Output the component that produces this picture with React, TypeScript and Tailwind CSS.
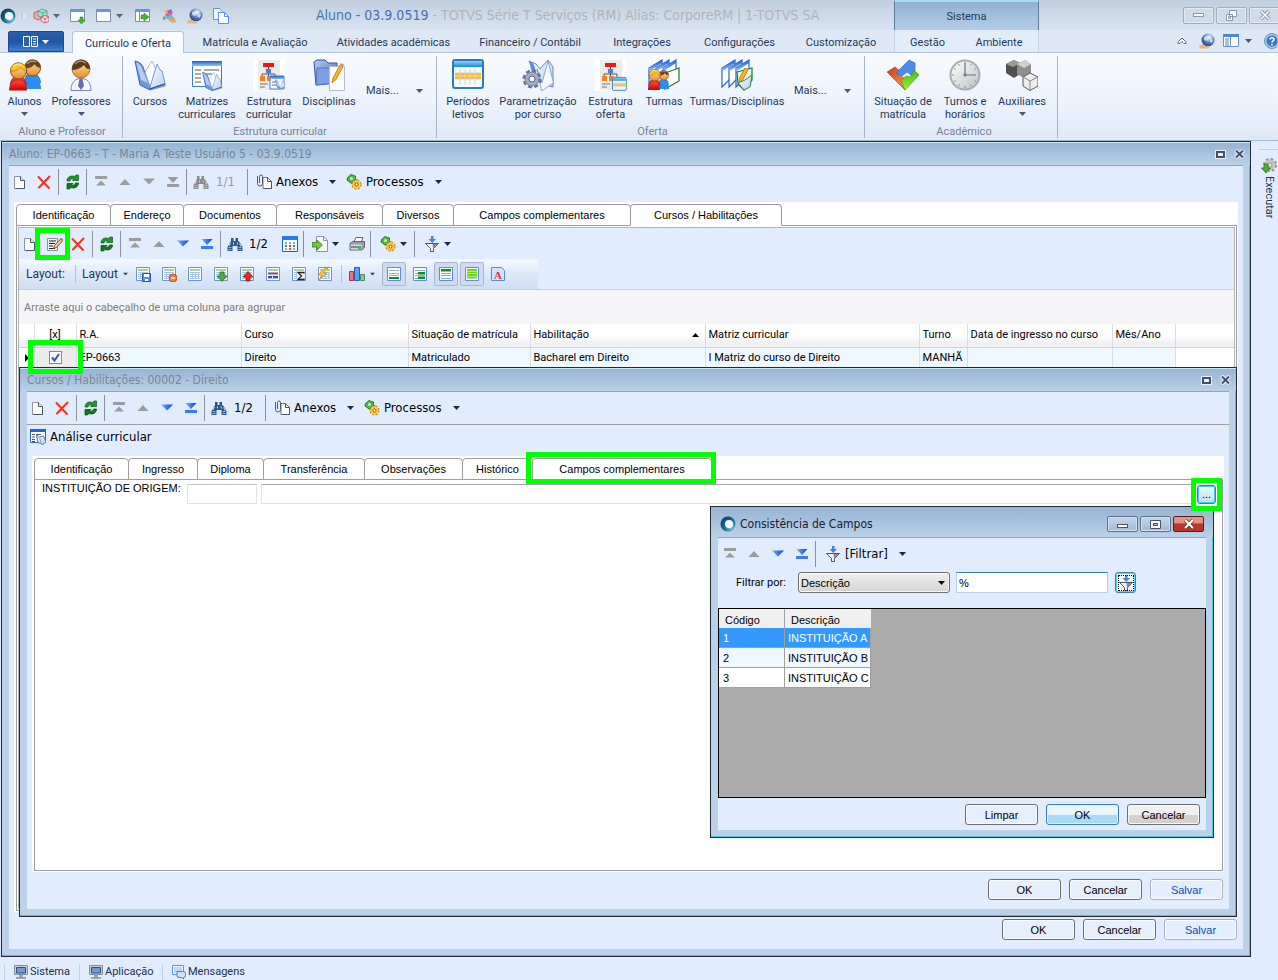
import React from 'react';

type IconProps = { children: React.ReactNode; size?: number; className?: string };

const Svg = ({ children, size = 16, className = '' }: IconProps) => (
  <svg width={size} height={size} viewBox={`0 0 ${size} ${size}`} className={`shrink-0 ${className}`} aria-hidden="true">
    {children}
  </svg>
);

// Shared gradients, referenced by id from every icon below
const Gradients = () => (
  <svg className="absolute w-0 h-0" aria-hidden="true">
    <defs>
      <linearGradient id="blueV" x1="0" y1="0" x2="0" y2="1"><stop offset="0" stopColor="#1e5fe0" /><stop offset="1" stopColor="#8cc0ff" /></linearGradient>
      <linearGradient id="arrow" x1="0" y1="0" x2="1" y2="0"><stop offset="0" stopColor="#7fb0ff" /><stop offset="0.5" stopColor="#3f78f0" /><stop offset="1" stopColor="#1440b8" /></linearGradient>
      <linearGradient id="pageD" x1="0" y1="0" x2="1" y2="1"><stop offset="0" stopColor="#ffffff" /><stop offset="1" stopColor="#b4cdf5" /></linearGradient>
      <linearGradient id="skyV" x1="0" y1="0" x2="0" y2="1"><stop offset="0" stopColor="#8fd4ff" /><stop offset="1" stopColor="#1a86dc" /></linearGradient>
      <linearGradient id="skin" x1="0" y1="0" x2="0" y2="1"><stop offset="0" stopColor="#ffe6a8" /><stop offset="1" stopColor="#e88a2a" /></linearGradient>
      <linearGradient id="redV" x1="0" y1="0" x2="0" y2="1"><stop offset="0" stopColor="#ff4a3a" /><stop offset="1" stopColor="#c80000" /></linearGradient>
      <linearGradient id="orangeH" x1="0" y1="0" x2="1" y2="1"><stop offset="0" stopColor="#c83a14" /><stop offset="1" stopColor="#ff9a5a" /></linearGradient>
      <linearGradient id="greenV" x1="0" y1="0" x2="0" y2="1"><stop offset="0" stopColor="#3fb81c" /><stop offset="1" stopColor="#a8f02e" /></linearGradient>
      <linearGradient id="folder" x1="0" y1="0" x2="1" y2="1"><stop offset="0" stopColor="#b8ccf5" /><stop offset="1" stopColor="#3d66c0" /></linearGradient>
      <radialGradient id="globe" cx="0.6" cy="0.3" r="0.8"><stop offset="0" stopColor="#ffffff" /><stop offset="0.5" stopColor="#5a7fc0" /><stop offset="1" stopColor="#142f6e" /></radialGradient>
      <radialGradient id="ring" cx="0.7" cy="0.7" r="0.9"><stop offset="0" stopColor="#8ad0e4" /><stop offset="0.5" stopColor="#176a8e" /><stop offset="1" stopColor="#0a2c48" /></radialGradient>
      <linearGradient id="clockFace" x1="0" y1="0" x2="1" y2="1"><stop offset="0" stopColor="#ffffff" /><stop offset="1" stopColor="#b9c2c6" /></linearGradient>
    </defs>
  </svg>
);

/* ---------- 16px icons ---------- */

const LogoIcon = () => (
  <Svg>
    <circle cx="8" cy="8" r="7.5" fill="url(#ring)" />
    <circle cx="9" cy="8" r="4" fill="#f2f8fc" />
  </Svg>
);

const DocIcon = () => (
  <Svg>
    <path d="M1.500 2.500h6l4 4v8h-10z" fill="#fff" stroke="#8a93a5" />
    <path d="M7.500 2.500v4h4" fill="#dfe6f2" stroke="#4b5568" />
    <path d="M11.500 6.500v8h-9" fill="none" stroke="#4b5568" />
  </Svg>
);

const DeleteIcon = () => (
  <Svg>
    <path d="M1.500 3 12 14M12.500 2.500 2 13.500" stroke="#f0321e" strokeWidth="2" strokeLinecap="round" />
  </Svg>
);

const RefreshIcon = () => (
  <Svg>
    <path d="M2 7C2 3 6 1 9.500 2.500L11 1h2.500v5.500H7.500L9 4.800C7 4.300 5.500 5 5 7z" fill="#1d9a2c" stroke="#0b5a18" strokeWidth="0.7" />
    <path d="M13.500 9c0 4-4 6-7.500 4.500L4.500 15H2V9.500h6L6.500 11.200c2 .5 3.500-.2 4-2.200z" fill="#0f7a20" stroke="#083f10" strokeWidth="0.7" />
  </Svg>
);

const FirstIcon = () => (
  <Svg><path d="M2 2h12v3H2zM8 6.500l5 5H3z" fill="#9c9c9c" /></Svg>
);
const PrevIcon = () => (
  <Svg><path d="M8 5l5.500 6h-11z" fill="#9c9c9c" /></Svg>
);
const NextIcon = ({ off }: { off?: boolean }) => (
  <Svg><path d="M2 4.500h12L8 10.500z" fill={off ? '#9c9c9c' : 'url(#arrow)'} /></Svg>
);
const LastIcon = ({ off }: { off?: boolean }) => (
  <Svg>
    <path d="M2.500 3h11L8 9z" fill={off ? '#9c9c9c' : 'url(#arrow)'} />
    <path d="M2 10h12v3H2z" fill={off ? '#9c9c9c' : '#3f78f0'} />
  </Svg>
);

const BinocularsIcon = ({ off }: { off?: boolean }) => {
  const c = off ? '#8a8a8a' : '#2b5490';
  const hi = off ? '#d0d0d0' : '#cfe2fa';
  return (
    <Svg>
      <path d="M4 2h2.500v3h2V2H11v3l1.500 1 3 5v4h-5v-5h-5v5h-5v-4l3-5L4 5z" fill={c} />
      <path d="M3.500 7l-1.500 3M10 6.500l.5 2M6.500 6.500v2M12.500 7.500l1.500 3" stroke={hi} />
      <path d="M1.500 11.500h3M11.500 11.500h3M1.500 13.500h3M11.500 13.500h3" stroke={hi} strokeWidth="0.7" />
    </Svg>
  );
};

const ClipIcon = () => (
  <Svg>
    <path d="M7 3.500h4.500l4 4v7H7z" fill="#fff" stroke="#6b7280" />
    <path d="M11.500 3.500v4h4v7H8" fill="none" stroke="#4b5568" />
    <path d="M1.500 2v7.500a2.500 2.500 0 0 0 5 0V2.500a1.500 1.500 0 0 0-3 0v6.500" fill="none" stroke="#5a5a5a" />
  </Svg>
);

const GearsIcon = () => (
  <Svg>
    <path d="M5.500 0l1.500 1.500L9.500 2v2.500l1 1.500-2 1-1 2.500-2.500-.5-2-1.500L1 6l.500-2.500L3.500 2z" fill="#4fb848" stroke="#1f7a25" />
    <circle cx="5.500" cy="4.500" r="1.500" fill="#c8f0b8" />
    <circle cx="10.500" cy="10.500" r="3.800" fill="#fbc63a" stroke="#b5750c" strokeWidth="2.500" strokeDasharray="1.800 1.200" />
    <circle cx="10.500" cy="10.500" r="4.200" fill="#fbc63a" />
    <circle cx="10.500" cy="10.500" r="1.500" fill="#fff" stroke="#8a5a0c" />
  </Svg>
);

const EditIcon = () => (
  <Svg>
    <path d="M.500 2.500h10v12H.500z" fill="#f4f4f4" stroke="#8a93a5" />
    <path d="M2 5h7M2 7.500h6M2 10h4M2 12.500h6" stroke="#222" />
    <path d="M6.500 12.500l1-3L14 2.500l2 2-6.500 7z" fill="#f0c890" stroke="#5a3a20" strokeWidth="0.8" />
    <path d="M13 3.500l1.500-1.500L16 3.500 15 5z" fill="#e06050" />
  </Svg>
);

const CalendarIcon = () => (
  <Svg>
    <path d="M.5.5h15v15H.5z" fill="#f4f9ff" stroke="#1e5fc0" />
    <path d="M0 0h16v4H0z" fill="#2a78e4" />
    <path d="M3 6h2v2H3zM7 6h2v2H7zM11 6h2v2h-2zM3 12h2v2H3zM11 12h2v2h-2z" fill="#7aaef0" />
    <path d="M3 9h2v2H3zM11 9h2v2h-2z" fill="#2f9b4a" />
    <path d="M7 9h2v2H7zM7 12h2v2H7z" fill="#e04a3a" />
  </Svg>
);

const ExportIcon = () => (
  <Svg>
    <path d="M4.500.500h7l4 4v11h-11z" fill="#fff" stroke="#8a93a5" />
    <path d="M11.500.500v4h4" fill="none" stroke="#8a93a5" />
    <path d="M0 6.500h5V4l5.500 5L5 14v-3H0z" fill="#6cc83a" stroke="#2f7f12" strokeWidth="0.8" />
  </Svg>
);

const PrinterIcon = () => (
  <Svg>
    <path d="M4.500 6.500L7 1.500h7l-2 5z" fill="#fff" stroke="#666" />
    <path d="M1 7.500L3.500 5.500h12V11L13 14H1z" fill="#9aa0a8" stroke="#444" strokeWidth="0.8" />
    <path d="M1.500 8.500h11v5h-11z" fill="#d4d8dd" />
    <path d="M2 11h10" stroke="#333" />
    <path d="M9 12h3v1.500H9z" fill="#2fbf3f" />
  </Svg>
);

const FilterIcon = () => (
  <Svg>
    <path d="M1.500 7.500h13L9.500 12.500v3h-3v-3z" fill="#f4f4f4" stroke="#444" strokeWidth="0.9" />
    <path d="M8.500 8h5l-4.500 4.500z" fill="#8a8a8a" />
    <path d="M7 0h2.500v3H12L8.200 7 4.500 3H7z" fill="#4a7fe0" />
  </Svg>
);

const TableBase = () => (
  <>
    <path d="M1.500 1.500h13v13h-13z" fill="#fff" stroke="#6f95c8" />
    <path d="M3 4h10" stroke="#4fa84f" />
    <path d="M3 6.500h10M3 8.500h10M3 10.500h10M3 12.500h10M5.500 6v7M8.500 6v7M11.500 6v7" stroke="#a9c4ea" />
  </>
);

const TableIcon = ({ children }: { children?: React.ReactNode }) => (
  <Svg><TableBase />{children}</Svg>
);

const BandIcon = ({ kind }: { kind: 'bottom' | 'right' | 'top' | 'all' }) => (
  <Svg>
    <path d="M1.500 1.500h13v13h-13z" fill="#fff" stroke="#5f8fd0" />
    {kind === 'all' ? (
      <path d="M3 4h10M3 6.500h10M3 9h10M3 11.500h10" stroke="#6fd41e" strokeWidth="2" />
    ) : (
      <path d="M3 4.500h10M3 7.500h10M3 9.500h10M3 12.500h10" stroke="#86b4b0" />
    )}
    {kind === 'bottom' && <path d="M3 11h10v2H3z" fill="#0c8a2c" />}
    {kind === 'right' && <path d="M6 6h7v2.500H6zM6 10.500h7V13H6z" fill="#0c8a2c" />}
    {kind === 'top' && <path d="M3 3h10v2.500H3z" fill="#0c8a2c" />}
  </Svg>
);

const ChartIcon = () => (
  <Svg>
    <path d="M.5 5.500h4v9h-4z" fill="#f0707c" stroke="#b8303c" />
    <path d="M5.500 1.500h5v13h-5z" fill="#5f9cf0" stroke="#2a5cb0" />
    <path d="M11.500 8.500h4v6h-4z" fill="#8fc49a" stroke="#4a8a5c" />
  </Svg>
);

const LetterIcon = () => (
  <Svg>
    <path d="M1.500 1.500h10l3 3v10h-13z" fill="#cfe4fc" stroke="#5a8ccc" />
    <text x="8" y="13" textAnchor="middle" fontSize="11" fontWeight="bold" fill="#d8342c" fontFamily="Liberation Serif, serif">A</text>
  </Svg>
);

const GlobeIcon = () => (
  <Svg>
    <circle cx="9" cy="7" r="6.500" fill="url(#globe)" />
    <path d="M5 4l3-1 2 2-2 3-3-1zM11 6l3 1-1 3-2-1z" fill="#dbe7f8" opacity="0.800" />
    <path d="M0 12.500l4-1 3 1.500h4l-2 2.500H1z" fill="#e8b48c" />
  </Svg>
);

const WindowIcon = ({ children }: { children?: React.ReactNode }) => (
  <Svg>
    <path d="M.5 1.500h14v12H.5z" fill="#fdfeff" stroke="#7c8ea8" />
    <path d="M1 2h13v2H1z" fill="#5f9be6" />
    {children}
  </Svg>
);

const CubesIcon = () => (
  <Svg>
    <path d="M1 5l4-2 4 2v5l-4 2-4-2z" fill="#f4aaa4" stroke="#c03a30" strokeWidth="0.700" />
    <path d="M5 3l4-2 5 2v5l-4 2-5-2z" fill="#a8e0d4" stroke="#3a9080" strokeWidth="0.700" />
    <path d="M5 3l5 2 4-2M10 5v5" fill="none" stroke="#3a9080" strokeWidth="0.700" />
    <path d="M8 9l4-1.500L16 9v4l-4 2-4-2z" fill="#fae4e6" stroke="#b83a48" strokeWidth="0.700" />
    <path d="M8 9l4 2 4-2M12 11v4" fill="none" stroke="#b83a48" strokeWidth="0.700" />
  </Svg>
);

const PaintIcon = () => (
  <Svg>
    <path d="M3 3l3-2 2 3-3 2z" fill="#e8c040" />
    <path d="M6 3l4-2 2 4-4 2z" fill="#8a6ad0" />
    <path d="M4 6l6-2 1 3-6 2z" fill="#e858b8" />
    <path d="M5 9l6-2 1 2-6 2z" fill="#4fc0e0" />
    <path d="M7 11l6-2 1 2-6 2z" fill="#e0a040" />
    <path d="M9 13l5-2 1 3-4 1z" fill="#d0a890" />
    <path d="M2 9l2-1 1 3-3 1z" fill="#58b858" />
  </Svg>
);

const CopyIcon = () => (
  <Svg>
    <path d="M.5.500h6l3 3v8h-9z" fill="#eef5ff" stroke="#5f92d8" />
    <path d="M5.500 4.500h6l4 4v7h-10z" fill="#fff" stroke="#5f92d8" />
    <path d="M11.500 4.500v4h4" fill="none" stroke="#5f92d8" />
  </Svg>
);

const PanesIcon = () => (
  <Svg>
    <path d="M.5 1.500h15v12H.5z" fill="#fff" stroke="#6a8fc4" />
    <path d="M0 1h16v3H0z" fill="#4f86d6" />
    <path d="M2 6h4M2 8h4M2 10h4M2 12h4" stroke="#5a7fb4" />
    <path d="M7.500 4v9" stroke="#6a8fc4" />
  </Svg>
);

const HelpIcon = () => (
  <Svg>
    <circle cx="8" cy="8" r="7.500" fill="#a9c8ea" stroke="#6a94c8" />
    <circle cx="8" cy="8" r="5.500" fill="#3a78c8" />
    <path d="M6 6.500C6 4 10 4 10 6.500 10 8 8 7.800 8 9.500M8 10.800v1.500" stroke="#fff" strokeWidth="1.500" fill="none" />
  </Svg>
);

const AnalysisIcon = () => (
  <Svg>
    <path d="M.5.500h15v13H.5z" fill="#fff" stroke="#2a6ad0" />
    <path d="M0 0h16v3H0z" fill="#1f62dc" />
    <path d="M2 5.500h3M6 5.500h5M2 8h3M6 8h1M2 10.500h3M2 12.500h3" stroke="#555" />
    <path d="M6.500 6l3 2 4-1 2.500 6-3 2.500-5-2z" fill="url(#pageD)" stroke="#5878b8" />
    <path d="M9.500 8l2 7" stroke="#8aa4d4" />
  </Svg>
);

const MonitorIcon = () => (
  <Svg>
    <path d="M1.500 1.500h13v9h-13z" fill="#c9cdd2" stroke="#8a8f96" />
    <path d="M3.500 3.500h9v5.500h-9z" fill="#6f9bdc" stroke="#2d4f8a" />
    <path d="M6 11h4v2H6zM3 13h10v2H3z" fill="#9aa0a8" />
  </Svg>
);

const MessagesIcon = () => (
  <Svg>
    <path d="M1.500 1.500h11v9h-11z" fill="#eef6ff" stroke="#5f92d8" />
    <path d="M3 4h8M3 6h8M3 8h5" stroke="#8fb4e4" />
    <path d="M6 7.500h6.500a2 2 0 0 1 2 2v2a2 2 0 0 1-2 2V15l-2-1.500H8a2 2 0 0 1-2-2z" fill="#cfe2fa" stroke="#4f7fc0" />
  </Svg>
);

const RunIcon = () => (
  <Svg>
    <circle cx="9" cy="7" r="5" fill="none" stroke="#8f8f8a" strokeWidth="4" strokeDasharray="2.200 1.700" />
    <circle cx="9" cy="7" r="4" fill="none" stroke="#c4c4be" strokeWidth="3" />
    <circle cx="9" cy="7" r="2" fill="#e1edff" stroke="#8f8f8a" />
    <path d="M3 6h4v4h2.500L5 15 .5 10H3z" fill="#4fae3a" stroke="#2a7a1c" strokeWidth="0.800" />
  </Svg>
);

const Caret = ({ className = 'text-[#1f2937]' }: { className?: string }) => (
  <svg width="7" height="4" viewBox="0 0 7 4" className={`shrink-0 ${className}`} aria-hidden="true">
    <path d="M0 0h7L3.500 4z" fill="currentColor" />
  </svg>
);

/* ---------- 32px ribbon icons ---------- */

const Person = ({ x, y, hair, body }: { x: number; y: number; hair: string; body: string }) => (
  <g transform={`translate(${x} ${y})`}>
    <path d="M1 24c0-6 3.500-10 8-10s8.500 4 8.500 10z" fill={body} stroke="#30406a" strokeWidth="0.500" />
    <circle cx="9.500" cy="9" r="8" fill="url(#skin)" stroke="#8a4a10" />
    <path d="M1.500 9C1.500 4 5 .800 9.500 .800S17.500 4 17.500 8.500C14 8.500 12.500 6.500 11.500 5 9 8.500 5 9.500 1.500 9z" fill={hair} stroke="#7a4a14" strokeWidth="0.500" />
    <path d="M4 5c2-3 6-3.500 9-2" stroke="#fff" strokeWidth="1.200" opacity="0.500" fill="none" />
  </g>
);

const Frames = () => (
  <>
    <path d="M1 9l13-8v14L1 28z" fill="#fff" stroke="#2a62cc" strokeWidth="1.200" />
    <path d="M1 9l13-8v3L1 12.500z" fill="url(#blueV)" />
    <path d="M8 9l13-8v14L8 28z" fill="#fff" stroke="#2a62cc" strokeWidth="1.200" />
    <path d="M8 9l13-8v3L8 12.500z" fill="url(#blueV)" />
    <path d="M15 9l13-8v14L15 28z" fill="#fff" stroke="#2a62cc" strokeWidth="1.200" />
    <path d="M15 9l13-8v3L15 12.500z" fill="url(#blueV)" />
  </>
);

const BookShape = () => (
  <>
    <path d="M1 2c5 1 8 4 9 9l7 13-1 7L6 26z" fill="#6f96e0" stroke="#3a64b4" />
    <path d="M2 3c4 2 6 5 7 9l5 12-7-3z" fill="#b4ccf6" />
    <path d="M11 13l7-11 5 11-1 12-6 2z" fill="#fff" stroke="#8ea4cc" strokeWidth="0.800" />
    <path d="M16 28L23 5l3 6 2 1 3 12v3l-15 4z" fill="url(#pageD)" stroke="#5a7cc0" strokeWidth="0.800" />
    <path d="M16 30l15-5" stroke="#2f58ac" strokeWidth="1.500" />
  </>
);

const CalendarShape = () => (
  <>
    <path d="M3 1h26a2 2 0 0 1 2 2v24a2 2 0 0 1-2 2H3a2 2 0 0 1-2-2V3a2 2 0 0 1 2-2z" fill="#f4faff" stroke="#2a7cbc" strokeWidth="2" />
    <path d="M2 2h28v6H2z" fill="url(#skyV)" />
    <path d="M3 14h26v6H3z" fill="#ffb41e" />
    <path d="M3 17h26" stroke="#ffd04a" strokeWidth="2" />
    <path d="M3 14h26M3 20h26M8 10v16M13 10v16M18 10v16M23 10v16" stroke="#d4d4d4" />
  </>
);

const ChartPage = () => (
  <>
    <path d="M0 0h32v32H0z" fill="#fff" />
    <path d="M5 1h22v30H5z" fill="#ebebeb" />
    <path d="M10 4h11v4H10z" fill="#f41414" />
    <path d="M15.500 8v10M9 18v-3h13v3" stroke="#555" fill="none" />
    <path d="M13 10h5v4h-5z" fill="#4a80d8" />
    <path d="M7 17h5v5H7zM14 17h5v5h-5z" fill="#f58220" />
    <path d="M7 25h8M7 28h5" stroke="#b0b0b0" strokeWidth="2" />
  </>
);

const bigIcons: Record<string, React.ReactNode> = {
  alunos: (
    <>
      <Person x={14} y={0} hair="#6a4420" body="#2a90f0" />
      <path d="M15 30c0-8 4-10 9-10s8 4 8 10z" fill="#2a90f0" />
      <Person x={0} y={3} hair="#ffc21e" body="url(#redV)" />
      <path d="M0 31.500c0-7 4-10 9-10s9 3 9 10z" fill="url(#redV)" />
    </>
  ),
  professores: (
    <>
      <path d="M6 31.500c0-8 4-12 10-12s10 4 10 12z" fill="#f6f8ff" stroke="#7484b8" />
      <path d="M14.500 20h3l1.500 7-3 4-3-4z" fill="#6a68b8" />
      <circle cx="16" cy="10" r="9" fill="url(#skin)" stroke="#a05a14" strokeWidth="0.800" />
      <path d="M7 11C7 4 11 .500 16 .500S25 4 25 10c-4 0-5-2-6-4-3 3.500-8 5-12 5z" fill="#5a3a1e" />
      <path d="M10 5c2-3 7-4 11-1" stroke="#b08a60" strokeWidth="1.500" fill="none" />
    </>
  ),
  cursos: <BookShape />,
  matrizes: (
    <>
      <path d="M1.500 2.500h29v25h-29z" fill="#fdfeff" stroke="#3f7ad8" />
      <path d="M1 2h30v5H1z" fill="url(#blueV)" />
      <path d="M4 11h6M13 11h15M4 15h6M13 15h8M4 19h6M4 23h6" stroke="#555" />
      <g transform="translate(11 12) scale(0.640)"><BookShape /></g>
    </>
  ),
  estrutura: (
    <>
      <ChartPage />
      <path d="M17 17h14v13H17z" fill="#fff" stroke="#3f7ad8" />
      <path d="M17 17h14v3H17z" fill="url(#blueV)" />
      <path d="M19 23h4M19 26h4" stroke="#666" />
      <g transform="translate(22 20) scale(0.320)"><BookShape /></g>
    </>
  ),
  disciplinas: (
    <>
      <path d="M1 3l3-2h8l3 3h9v20L3 26z" fill="url(#folder)" stroke="#2f55a4" />
      <path d="M4 9h18v15L3 26z" fill="#7f9fe4" stroke="#3f66b4" strokeWidth="0.700" />
      <path d="M16.500 7.500h15v24h-15z" fill="#fdfdff" stroke="#b4bccc" />
      <path d="M19 24l1-5 7-13 3 1.500-7 13z" fill="#ffb424" stroke="#b4700c" strokeWidth="0.800" />
      <path d="M27 6l1-2 3 1.500-1 2z" fill="#e08a80" />
    </>
  ),
  periodos: <CalendarShape />,
  parametrizacao: (
    <>
      <g transform="translate(6 0)">
        <path d="M1 2l12 23 12 3V8L20 1l-8 9-4-5z" fill="url(#pageD)" stroke="#6a88c4" />
        <path d="M9 10l5 14 6-22 5.500 22-12 8z" fill="#f4f8ff" stroke="#7a94c8" strokeWidth="0.800" />
        <path d="M1 2c4 1 5 4 6 7l2 8-5-3z" fill="#5a8fe0" />
      </g>
      <circle cx="10" cy="20" r="7" fill="#a4acc4" stroke="#6a7290" strokeWidth="5" strokeDasharray="3.400 2.100" />
      <circle cx="10" cy="20" r="7" fill="#a4acc4" stroke="#7a82a0" />
      <circle cx="10" cy="20" r="3" fill="#f4f6fb" stroke="#5a6280" />
    </>
  ),
  oferta: (
    <>
      <ChartPage />
      <g transform="translate(17 18) scale(0.460)"><CalendarShape /></g>
    </>
  ),
  turmas: (
    <>
      <Frames />
      <path d="M17 14l14-5v13l-14 8z" fill="#fff" stroke="#1a7a2c" strokeWidth="1.200" />
      <g transform="translate(10 11) scale(0.600)"><Person x={0} y={0} hair="#6a4420" body="#2a90f0" /></g>
      <path d="M11 30c0-6 2-8 5-8s5 2 5 8z" fill="#2a90f0" />
      <g transform="translate(0 10) scale(0.700)"><Person x={0} y={0} hair="#ffc21e" body="url(#redV)" /></g>
      <path d="M0 31c0-6 3-8 6.500-8s5.500 2 5.500 8z" fill="url(#redV)" />
    </>
  ),
  turmasDisciplinas: (
    <>
      <Frames />
      <path d="M16 13l15-4v12l-8 10-6-6z" fill="#e8f8e8" stroke="#1a7a2c" strokeWidth="1.200" />
      <path d="M17 24l7-3 7-5-2 12-6 3z" fill="url(#pageD)" stroke="#2f8a4a" />
      <path d="M18 23l1-5 5-9 3 1.500-5 10z" fill="#ffb424" stroke="#b4700c" strokeWidth="0.800" />
    </>
  ),
  situacao: (
    <>
      <path d="M0 13l8-5 5 4-3 3 7 4-3 5 4 7z" fill="url(#orangeH)" stroke="#b03a14" strokeWidth="0.600" />
      <path d="M9 14L22 1l6 3v8l-4 4-4-3-5 4z" fill="#4f8ce8" stroke="#2a5cb8" strokeWidth="0.600" />
      <path d="M14 22l5-5 4 1 4-7 5 5-14 15z" fill="url(#greenV)" stroke="#3a9a0c" strokeWidth="0.600" />
    </>
  ),
  turnos: (
    <>
      <circle cx="16" cy="16" r="14.500" fill="url(#clockFace)" stroke="#a8aeb2" strokeWidth="2" />
      <path d="M16 4v12h11" stroke="#6f7678" fill="none" strokeWidth="1.200" />
      <path d="M14 16h4M16 14v4" stroke="#6f7678" />
      <path d="M16 3v2M16 27v2M3 16h2M9.500 5l1 1.500M22.500 5l-1 1.500M5 9.500l1.500 1M5 22.500l1.500-1M27 22.500l-1.500-1M9.500 27l1-1.500M22.500 27l-1-1.500M27 9.500l-1.500 1" stroke="#7f8688" />
    </>
  ),
  auxiliares: (
    <>
      <path d="M0 5l8-4 6 3v11l-6 4-8-5z" fill="#4f4f4f" />
      <path d="M0 5l8-4 6 3-7 4z" fill="#9a9a9a" />
      <path d="M11 5l8-4 6 4v10l-7 4-7-4z" fill="#8f8f8f" />
      <path d="M11 5l8-4 6 4-7 4z" fill="#d0d0d0" />
      <path d="M17 18l7-4 8 4v9l-8 4.500-7-4.500z" fill="#ececec" stroke="#5a5a5a" />
      <path d="M17 18l7 4 8-4M24 22v9" stroke="#8a8a8a" fill="none" />
    </>
  ),
};

/* ---------- Ribbon ---------- */

interface RibbonButtonProps {
  icon: string;
  label: string;
  width: string;
  caret?: boolean;
}

const RibbonButton: React.FC<RibbonButtonProps> = ({ icon, label, width, caret }) => (
  <button className={`flex flex-col items-center ${width}`}>
    <Svg size={32}>{bigIcons[icon]}</Svg>
    <span className="mt-1 whitespace-pre text-center leading-[13px]">{label}</span>
    {caret && <Caret className="mt-1 text-[#46577a]" />}
  </button>
);

const MoreButton = () => (
  <button className="flex items-center self-start mt-6 pl-2 h-4">
    <span className="w-[50px] text-left">Mais...</span>
    <Caret className="text-[#46577a]" />
  </button>
);

const RibbonGroup = ({ title, width, children }: { title: string; width: string; children: React.ReactNode }) => (
  <div className={`flex flex-col h-[82px] border-r border-[#a3b4cc] shrink-0 ${width}`}>
    <div className="flex flex-1 items-start pt-[3px]">{children}</div>
    <div className="h-3 leading-3 text-center text-[#75839b]">{title}</div>
  </div>
);

const menuTabs = [
  { label: 'Matrícula e Avaliação', width: 'w-[136px]' },
  { label: 'Atividades acadêmicas', width: 'w-[141px]' },
  { label: 'Financeiro / Contábil', width: 'w-[132px]' },
  { label: 'Integrações', width: 'w-[92px]' },
  { label: 'Configurações', width: 'w-[103px]' },
  { label: 'Customização', width: 'w-[100px]' },
];

const WindowButton = ({ children, label }: { children: React.ReactNode; label: string }) => (
  <button aria-label={label} className="flex items-center justify-center w-[31px] h-[17px] rounded-[2px] border border-[#9fadbe] bg-[#cfdbe8] shadow-[inset_0_0_0_1px_#e2eaf3]">
    {children}
  </button>
);

const TitleBar = () => (
  <header className="flex items-stretch h-[30px] bg-linear-to-b from-[#c1cfdf] to-[#d7e3f1]">
    <div className="flex items-center w-[316px] shrink-0 pt-0.5">
      <LogoIcon />
      <span className="ml-1.5 w-[3px] h-1 bg-[#e8eff7] border-l border-[#a8b6c6]" />
      <button className="ml-2 flex items-center gap-1" aria-label="Módulos"><CubesIcon /><Caret className="text-[#55657f]" /></button>
      <button className="ml-2.5" aria-label="Nova janela">
        <WindowIcon><path d="M10 9h3v3h2l-3.500 4L8 12h2z" fill="#4fae3a" stroke="#2a7a1c" strokeWidth="0.500" /></WindowIcon>
      </button>
      <button className="ml-2.5 flex items-center gap-1" aria-label="Janelas"><WindowIcon /><Caret className="text-[#55657f]" /></button>
      <button className="ml-3" aria-label="Executar">
        <WindowIcon><path d="M4.500 3v10" stroke="#7c8ea8" /><path d="M6 7h3V5l5 4-5 4v-2H6z" fill="#4fae3a" stroke="#2a7a1c" strokeWidth="0.500" /></WindowIcon>
      </button>
      <button className="ml-2.5" aria-label="Aparência"><PaintIcon /></button>
      <button className="ml-2.5" aria-label="Internet"><GlobeIcon /></button>
      <button className="ml-2.5" aria-label="Copiar"><CopyIcon /></button>
    </div>
    <h1 className="w-[578px] shrink-0 self-center whitespace-nowrap font-['DejaVu_Sans_Condensed','Noto_Sans',sans-serif] text-sm text-[#b3b3b8]">
      <span className="text-[#4272b2]">Aluno - 03.9.0519</span> - TOTVS Série T Serviços (RM) Alias: CorporeRM | 1-TOTVS SA
    </h1>
    <div className="flex items-center justify-center w-[145px] shrink-0 pt-0.5 border-x border-[#5f7a98] border-t-2 border-t-[#a8dcf0] bg-linear-to-b from-[#92b2d1] to-[#b4cde7] text-[#1e395b]">
      Sistema
    </div>
    <div className="flex flex-1 items-center justify-end gap-0.5 -mr-0.5">
      <WindowButton label="Minimizar"><span className="w-[11px] h-1 border border-[#8c98a8] bg-white" /></WindowButton>
      <WindowButton label="Restaurar">
        <svg width="13" height="11" viewBox="0 0 13 11"><path d="M4.500.500h7v6h-7zM1.500 4.500h6v6h-6z" fill="#fff" stroke="#8c98a8" /><path d="M3.500 6.500h2v2h-2z" fill="none" stroke="#8c98a8" /></svg>
      </WindowButton>
      <WindowButton label="Fechar">
        <svg width="12" height="10" viewBox="0 0 12 10"><path d="M2 1l8 8M10 1L2 9" stroke="#8c98a8" strokeWidth="3.500" /><path d="M2 1l8 8M10 1L2 9" stroke="#fff" strokeWidth="1.500" /></svg>
      </WindowButton>
    </div>
  </header>
);

const MenuTabs = () => (
  <nav className="flex items-stretch h-[23px] shrink-0 bg-[#dfe9f6] border-b border-[#b1c3dd] text-[#1e395b]">
    <button aria-label="Menu" className="flex items-center justify-center gap-1 ml-2 mt-px w-14 rounded-t-[2px] border border-[#1c4a92] bg-linear-to-b from-[#2a5fae] via-[#1f54a6] to-[#3f80d0]">
      <svg width="15" height="11" viewBox="0 0 15 11"><path d="M.5.500h6v10h-6zM8.500.500h6v10h-6z" fill="#2f62ac" stroke="#fff" /><path d="M10 3h3M10 5.500h3M10 8h3" stroke="#fff" /></svg>
      <Caret className="text-white" />
    </button>
    <button className="ml-2 mt-px -mb-px w-[112px] pt-0.5 rounded-t-[3px] border border-b-0 border-[#b1c3dd] bg-[#f8fbff]">Currículo e Oferta</button>
    <span className="w-[3px]" />
    {menuTabs.map(t => (
      <button key={t.label} className={`whitespace-nowrap pt-1 ${t.width}`}>{t.label}</button>
    ))}
    <div className="flex ml-[3px] w-[145px] border-x border-[#c3d3e6] bg-[#e3edf9]">
      <button className="w-[65px] pt-1">Gestão</button>
      <button className="w-[78px] pt-1">Ambiente</button>
    </div>
    <div className="flex flex-1 items-center justify-end">
      <button aria-label="Recolher faixa" className="mr-3">
        <svg width="10" height="8" viewBox="0 0 10 8"><path d="M1 5l4-4 4 4v1.500H7L5 4.500 3 6.500H1z" fill="#fff" stroke="#5a6880" /></svg>
      </button>
      <button aria-label="Idioma" className="mr-2"><GlobeIcon /></button>
      <button aria-label="Painéis" className="flex items-center gap-1.5"><PanesIcon /><Caret className="text-[#46577a]" /></button>
      <button aria-label="Ajuda" className="ml-3 -mr-0.5"><HelpIcon /></button>
    </div>
  </nav>
);

const Ribbon = () => (
  <div className="flex items-start h-[88px] pt-[3px] shrink-0 overflow-hidden border-b border-[#a9b9ce] bg-linear-to-b from-[#f8fbff] via-[#eef4fd] to-[#dfe9f6] text-[#1e395b]">
    <RibbonGroup title="Aluno e Professor" width="w-[123px] pl-0.5">
      <RibbonButton icon="alunos" label="Alunos" width="w-[45px]" caret />
      <RibbonButton icon="professores" label="Professores" width="w-[68px]" caret />
    </RibbonGroup>
    <RibbonGroup title="Estrutura curricular" width="w-[314px] pl-px">
      <RibbonButton icon="cursos" label="Cursos" width="w-[52px]" />
      <RibbonButton icon="matrizes" label={'Matrizes\ncurriculares'} width="w-[62px]" />
      <RibbonButton icon="estrutura" label={'Estrutura\ncurricular'} width="w-[62px]" />
      <RibbonButton icon="disciplinas" label="Disciplinas" width="w-[58px]" />
      <MoreButton />
    </RibbonGroup>
    <RibbonGroup title="Oferta" width="w-[428px] pl-1">
      <RibbonButton icon="periodos" label={'Períodos\nletivos'} width="w-[54px]" />
      <RibbonButton icon="parametrizacao" label={'Parametrização\npor curso'} width="w-[86px]" />
      <RibbonButton icon="oferta" label={'Estrutura\noferta'} width="w-[59px]" />
      <RibbonButton icon="turmas" label="Turmas" width="w-12" />
      <RibbonButton icon="turmasDisciplinas" label="Turmas/Disciplinas" width="w-[98px]" />
      <MoreButton />
    </RibbonGroup>
    <RibbonGroup title="Acadêmico" width="w-[193px] pl-1.5">
      <RibbonButton icon="situacao" label={'Situação de\nmatrícula'} width="w-16" />
      <RibbonButton icon="turnos" label={'Turnos e\nhorários'} width="w-[60px]" />
      <RibbonButton icon="auxiliares" label="Auxiliares" width="w-[54px]" caret />
    </RibbonGroup>
  </div>
);

/* ---------- Shared pieces ---------- */

const Highlight = ({ className }: { className: string }) => (
  <span className={`absolute z-30 border-[5px] border-[#00ff00] pointer-events-none ${className}`} />
);

const ToolButton = ({ label, children, className = 'w-6' }: { label: string; children: React.ReactNode; className?: string }) => (
  <button aria-label={label} title={label} className={`relative flex items-center justify-center shrink-0 h-6 ${className}`}>
    {children}
  </button>
);

const Sep = () => <span className="ml-px mr-0.5 w-px h-[26px] bg-[#8b909a] shrink-0" />;

const NavButtons = ({ off }: { off?: boolean }) => (
  <>
    <ToolButton label="Primeiro"><FirstIcon /></ToolButton>
    <ToolButton label="Anterior"><PrevIcon /></ToolButton>
    <ToolButton label="Próximo"><NextIcon off={off} /></ToolButton>
    <ToolButton label="Último"><LastIcon off={off} /></ToolButton>
  </>
);

const toolbarText = "font-['DejaVu_Sans_Condensed','Noto_Sans',sans-serif] text-[13px] text-black";

const RecordToolbar = ({ counter, off }: { counter: string; off?: boolean }) => (
  <div className={`flex items-center h-8 ${toolbarText}`}>
    <ToolButton label="Novo"><DocIcon /></ToolButton>
    <ToolButton label="Excluir"><DeleteIcon /></ToolButton>
    <Sep />
    <ToolButton label="Atualizar"><RefreshIcon /></ToolButton>
    <Sep />
    <NavButtons off={off} />
    <Sep />
    <ToolButton label="Localizar"><BinocularsIcon off={off} /></ToolButton>
    <span className={`w-[33px] pl-[3px] ${off ? 'text-[#9a9a9a]' : ''}`}>{counter}</span>
    <Sep />
    <button className="flex items-center h-6 ml-1.5 gap-1">
      <ClipIcon />
      <span className="w-[49px] text-left">Anexos</span>
      <Caret />
    </button>
    <button className="flex items-center h-6 ml-2.5 gap-1">
      <GearsIcon />
      <span className="w-[65px] text-left">Processos</span>
      <Caret />
    </button>
  </div>
);

interface PageTab { label: string; width: string; active?: boolean; marked?: boolean }

const TabStrip = ({ tabs }: { tabs: PageTab[] }) => (
  <div role="tablist" className="flex h-[22px] -mb-px font-['Liberation_Sans',Arial,sans-serif] text-[11px] text-black">
    {tabs.map(t => (
      <button
        key={t.label}
        role="tab"
        aria-selected={!!t.active}
        className={`relative -mr-px rounded-t-[4px] border border-[#9d9d9d] bg-white ${t.width} ${t.active ? 'border-b-white' : ''}`}
      >
        {t.label}
        {t.marked && <Highlight className="-left-[7px] -right-[5px] -top-[7px] -bottom-[5px]" />}
      </button>
    ))}
  </div>
);

const buttonStyles = {
  normal: 'border-[#6f6f6f] bg-[#e6effd] text-black shadow-[inset_0_0_0_1px_#f8fbff]',
  primary: 'border-[#3c7fb1] bg-linear-to-b from-[#e8f6fd] from-50% to-[#a9dbf6] to-51% text-black shadow-[inset_0_0_0_1px_#d8f2fc]',
  gray: 'border-[#707070] bg-linear-to-b from-[#f0f0f0] from-50% to-[#d2d2d2] to-51% text-black shadow-[inset_0_0_0_1px_#f6f6f6]',
  link: 'border-[#adb2b8] bg-[#e3eefe] text-[#0f4fb0] shadow-[inset_0_0_0_1px_#f8fbff]',
};

const PushButton = ({ label, kind = 'normal' }: { label: string; kind?: keyof typeof buttonStyles }) => (
  <button className={`w-[73px] h-[21px] rounded-[3px] border font-['Liberation_Sans',Arial,sans-serif] text-[11px] ${buttonStyles[kind]}`}>
    {label}
  </button>
);

const WindowFooter = () => (
  <div className="flex justify-end gap-2 pt-[7px] pb-[9px] pr-1.5">
    <PushButton label="OK" />
    <PushButton label="Cancelar" />
    <PushButton label="Salvar" kind="link" />
  </div>
);

const ChildWindow = ({ title, className, children }: { title: string; className: string; children: React.ReactNode }) => (
  <section className={`flex flex-col border border-[#1f2b33] bg-[#bad1e9] shadow-[inset_-1px_-1px_0_#4bc4e2] ${className}`}>
    <div className="flex items-center h-[23px] shrink-0 pl-[7px] pr-[5px] border-t border-[#c6ecf6] bg-linear-to-b from-[#98b4d2] to-[#b9d1ea] font-['DejaVu_Sans_Condensed','Noto_Sans',sans-serif] text-xs text-[#7c858e]">
      <h2 className="flex-1">{title}</h2>
      <button aria-label="Maximizar" className="mr-2">
        <svg width="11" height="9" viewBox="0 0 11 9"><path d="M0 0h11v9H0z" fill="#e8f0f8" /><path d="M2 2h7v5H2z" fill="none" stroke="#44506a" strokeWidth="2" /></svg>
      </button>
      <button aria-label="Fechar">
        <svg width="11" height="10" viewBox="0 0 11 10"><path d="M1.500 1l8 8M9.500 1l-8 8" stroke="#e8f0f8" strokeWidth="4" /><path d="M2 1.500l7 7M9 1.500l-7 7" stroke="#44506a" strokeWidth="2" /></svg>
      </button>
    </div>
    <div className="flex flex-col flex-1 mx-[7px] mb-[7px] border-t border-[#a0a0a0] bg-[#e1edff]">{children}</div>
  </section>
);

/* ---------- Aluno window ---------- */

const alunoTabs: PageTab[] = [
  { label: 'Identificação', width: 'w-[95px]' },
  { label: 'Endereço', width: 'w-[74px]' },
  { label: 'Documentos', width: 'w-[94px]' },
  { label: 'Responsáveis', width: 'w-[107px]' },
  { label: 'Diversos', width: 'w-[72px]' },
  { label: 'Campos complementares', width: 'w-[178px]' },
  { label: 'Cursos / Habilitações', width: 'w-[152px]', active: true },
];

const GridToolbar = () => (
  <div className={`flex items-center h-[31px] ${toolbarText}`}>
    <ToolButton label="Novo"><DocIcon /></ToolButton>
    <ToolButton label="Editar">
      <EditIcon />
      <Highlight className="-left-2 -right-[3px] -top-1 -bottom-1" />
    </ToolButton>
    <ToolButton label="Excluir"><DeleteIcon /></ToolButton>
    <Sep />
    <ToolButton label="Atualizar"><RefreshIcon /></ToolButton>
    <Sep />
    <NavButtons />
    <Sep />
    <ToolButton label="Localizar"><BinocularsIcon /></ToolButton>
    <span className="w-[31px] pl-0.5">1/2</span>
    <ToolButton label="Calendário"><CalendarIcon /></ToolButton>
    <Sep />
    <ToolButton label="Exportar" className="w-[39px] gap-1"><ExportIcon /><Caret /></ToolButton>
    <ToolButton label="Imprimir"><PrinterIcon /></ToolButton>
    <Sep />
    <ToolButton label="Processos" className="w-10 gap-1"><GearsIcon /><Caret /></ToolButton>
    <Sep />
    <ToolButton label="Filtro" className="w-10 gap-1"><FilterIcon /><Caret /></ToolButton>
  </div>
);

const pressed = 'w-6 rounded-[2px] border border-[#a9b8d4] bg-[#cfdcf0]';

const LayoutToolbar = () => (
  <div className="flex items-center h-[30px] w-[519px] pl-[7px] bg-linear-to-b from-[#f4f9ff] via-[#dde9f8] to-[#cfdff3] text-xs text-[#1e395b]">
    <span className="w-[49px]">Layout:</span>
    <span className="w-px h-[18px] bg-[#b4c4dc]" />
    <button className="flex items-center h-6 ml-1.5"><span className="w-10 text-left">Layout</span><Caret className="text-[#2b3d5c] scale-75" /></button>
    <ToolButton label="Salvar layout" className="ml-px w-[26px]">
      <TableIcon><path d="M7.500 7.500h8v8h-8z" fill="#5f8fe0" stroke="#2a55a8" /><path d="M9 8h5v3H9zM10 13h3v2h-3z" fill="#fff" /></TableIcon>
    </ToolButton>
    <ToolButton label="Remover layout" className="w-[26px]">
      <TableIcon><circle cx="12" cy="12" r="4" fill="#f07a3a" stroke="#b8461c" strokeWidth="0.800" /><path d="M10 12h4" stroke="#fff" strokeWidth="1.500" /></TableIcon>
    </ToolButton>
    <ToolButton label="Layout padrão" className="w-[26px]"><TableIcon /></ToolButton>
    <ToolButton label="Importar" className="w-[26px]">
      <TableIcon><path d="M7 6h4v4h3l-5 5.500L4 10h3z" fill="#4fae3a" stroke="#24701a" strokeWidth="0.800" /></TableIcon>
    </ToolButton>
    <ToolButton label="Exportar" className="w-[26px]">
      <TableIcon><path d="M7 15h4v-4h3L9 5.500 4 11h3z" fill="#e8281c" stroke="#9a1410" strokeWidth="0.800" /></TableIcon>
    </ToolButton>
    <ToolButton label="Agrupar" className="w-[26px]">
      <TableIcon><path d="M3 7.500h10" stroke="#d83434" strokeWidth="1.500" /><path d="M3 11h4M8 11h5" stroke="#222" strokeWidth="1.500" /></TableIcon>
    </ToolButton>
    <ToolButton label="Totais" className="w-[26px]">
      <TableIcon><path d="M6 6h8v8H6z" fill="#e8eef8" /><path d="M13 7.500V6.500H7l3.500 3.500L7 13.500h6v-1" fill="none" stroke="#222" strokeWidth="1.300" /></TableIcon>
    </ToolButton>
    <ToolButton label="Fórmulas" className="w-[26px]">
      <TableIcon><path d="M8 2L1 9h4l-3 5 8-7H6l5-5z" fill="#ffc83c" stroke="#c88a1c" strokeWidth="0.800" /></TableIcon>
    </ToolButton>
    <span className="ml-[3px] w-px h-[18px] bg-[#b4c4dc]" />
    <ToolButton label="Gráficos" className="w-10 gap-1"><ChartIcon /><Caret className="text-[#2b3d5c] scale-75" /></ToolButton>
    <ToolButton label="Rodapé" className={pressed}><BandIcon kind="bottom" /></ToolButton>
    <ToolButton label="Rodapé do grupo" className="w-7"><BandIcon kind="right" /></ToolButton>
    <ToolButton label="Cabeçalho" className={pressed}><BandIcon kind="top" /></ToolButton>
    <span className="w-0.5" />
    <ToolButton label="Linhas" className={pressed}><BandIcon kind="all" /></ToolButton>
    <ToolButton label="Fonte" className="w-7"><LetterIcon /></ToolButton>
  </div>
);

const gridColumns = [
  { label: '', width: 'w-[15px]', value: '' },
  { label: '[x]', width: 'w-[42px]', value: '' },
  { label: 'R.A.', width: 'w-[165px]', value: 'EP-0663' },
  { label: 'Curso', width: 'w-[167px]', value: 'Direito' },
  { label: 'Situação de matrícula', width: 'w-[122px]', value: 'Matriculado' },
  { label: 'Habilitação', width: 'w-[175px]', value: 'Bacharel em Direito', sorted: true },
  { label: 'Matriz curricular', width: 'w-[214px]', value: 'I Matriz do curso de Direito' },
  { label: 'Turno', width: 'w-12', value: 'MANHÃ' },
  { label: 'Data de ingresso no curso', width: 'w-[145px]', value: '' },
  { label: 'Mês/Ano', width: 'w-[63px]', value: '' },
];

const StudentGrid = () => (
  <table className="w-full table-fixed border-collapse text-black">
    <thead>
      <tr className="h-[23px] bg-linear-to-b from-white from-50% to-[#f1f1f3] to-80%">
        {gridColumns.map((c, i) => (
          <th key={i} className={`border-b border-r border-b-[#d0d0d2] border-r-[#dcdce0] p-0 font-normal whitespace-nowrap ${c.width} ${i === 1 ? 'text-center' : 'text-left pl-[3px]'}`}>
            <span className="flex items-center">
              <span className="flex-1">{c.label}</span>
              {c.sorted && <Caret className="mr-1.5 rotate-180 text-black" />}
            </span>
          </th>
        ))}
        <th className="border-b border-[#d0d0d2] p-0" />
      </tr>
    </thead>
    <tbody>
      <tr className="h-5 bg-[#eff7ff]">
        <td className="border-r border-[#d6dde6] bg-white p-0">
          <svg width="4" height="8" viewBox="0 0 4 8" className="ml-1.5"><path d="M0 0l4 4-4 4z" fill="#000" /></svg>
        </td>
        <td className="border-r border-[#d6dde6] bg-[#ebebeb] p-0">
          <div className="relative flex items-center justify-center h-5">
            <input type="checkbox" defaultChecked aria-label="Selecionar EP-0663" className="appearance-none w-[13px] h-[13px] border border-[#8a8a8a] bg-[#f2f4f7] shadow-[inset_0_0_0_1px_#fff]" />
            <svg width="9" height="9" viewBox="0 0 9 9" className="absolute pointer-events-none"><path d="M1 4.500l2.500 3L8 1" stroke="#3c559a" strokeWidth="2" fill="none" /></svg>
            <Highlight className="-left-[7px] -right-[7px] -top-2 -bottom-1.5" />
          </div>
        </td>
        {gridColumns.slice(2).map(c => (
          <td key={c.label} className="border-r border-[#d6dde6] p-0 pl-[3px] whitespace-nowrap">{c.value}</td>
        ))}
        <td className="bg-white p-0" />
      </tr>
    </tbody>
  </table>
);

/* ---------- Consistência dialog ---------- */

const institutions = [
  { code: 1, name: 'INSTITUIÇÃO A', row: 'bg-[#3399ff] text-white' },
  { code: 2, name: 'INSTITUIÇÃO B', row: 'bg-[#eff7ff] text-black' },
  { code: 3, name: 'INSTITUIÇÃO C', row: 'bg-white text-black' },
];

const captionButton = 'flex items-center justify-center w-[31px] h-4 rounded-[2px] border border-[#5c7088] bg-linear-to-b from-[#c6d8ea] to-[#a0bad6] shadow-[inset_0_0_0_1px_#d4e2f0]';

const ConsistencyDialog = () => (
  <section role="dialog" aria-label="Consistência de Campos" className="absolute z-20 top-[138px] right-[22px] w-[504px] border border-[#1f2b33] bg-[#bad1e9] shadow-[inset_-1px_-1px_0_#4bc4e2]">
    <div className="flex items-center h-[30px] pl-[9px] pr-[9px] pt-1 bg-linear-to-b from-[#98b4d2] to-[#b9d1ea] font-['DejaVu_Sans_Condensed','Noto_Sans',sans-serif] text-xs text-[#14202e]">
      <LogoIcon />
      <h2 className="flex-1 ml-1">Consistência de Campos</h2>
      <div className="flex gap-0.5">
        <button aria-label="Minimizar" className={captionButton}><span className="w-[11px] h-1 mt-1 border border-[#4a5668] bg-white" /></button>
        <button aria-label="Maximizar" className={captionButton}>
          <svg width="11" height="9" viewBox="0 0 11 9"><path d="M.5.500h10v8H.5z" fill="#fff" stroke="#4a5668" /><path d="M3.500 3.500h4v2h-4z" fill="#a0bad6" stroke="#4a5668" /></svg>
        </button>
        <button aria-label="Fechar" className="flex items-center justify-center w-[31px] h-4 rounded-[2px] border border-[#5a1e1c] bg-linear-to-b from-[#e0938a] from-40% to-[#bb3426] to-50%">
          <svg width="12" height="10" viewBox="0 0 12 10"><path d="M2 1l8 8M10 1L2 9" stroke="#5a3a3c" strokeWidth="3.500" /><path d="M2 1l8 8M10 1L2 9" stroke="#fff" strokeWidth="2" /></svg>
        </button>
      </div>
    </div>
    <div className="mx-[7px] mb-[7px] border-t border-[#a0a0a0] bg-[#e1edff]">
      <div className={`flex items-center h-[31px] ${toolbarText}`}>
        <NavButtons />
        <Sep />
        <button className="flex items-center gap-1 h-6 ml-[7px]">
          <FilterIcon />
          <span className="w-[50px] text-left">[Filtrar]</span>
          <Caret />
        </button>
      </div>
      <div className="flex items-center h-[39px] pt-[3px] pb-[15px] pl-[18px] text-black">
        <label htmlFor="filterBy" className="w-[62px]">Filtrar por:</label>
        <div className="relative">
          <select id="filterBy" defaultValue="Descrição" className="appearance-none block w-[152px] h-[21px] pl-0.5 rounded-[3px] border border-[#707070] bg-linear-to-b from-[#f0f0f0] to-[#d4d4d4] shadow-[inset_0_0_0_1px_#f8f8f8] font-['Liberation_Sans',Arial,sans-serif]">
            <option>Descrição</option>
            <option>Código</option>
          </select>
          <Caret className="absolute right-[5px] top-[9px] text-black pointer-events-none" />
        </div>
        <input aria-label="Valor do filtro" defaultValue="%" className="ml-1.5 w-[152px] h-[21px] pl-[2px] border border-[#b5cfe7] border-t-[#3d7bad] bg-white font-['Liberation_Sans',Arial,sans-serif]" />
        <button aria-label="Aplicar filtro" className="flex items-center justify-center ml-[7px] w-[21px] h-[21px] rounded-[3px] border border-[#3c7fb1] bg-[#f0faff] shadow-[inset_0_0_0_1px_#5cd0f0]">
          <span className="flex outline outline-dotted outline-black -outline-offset-1"><FilterIcon /></span>
        </button>
      </div>
      <div className="h-[190px] border border-black bg-[#ababab]">
        <table className="w-[152px] table-fixed border-separate border-spacing-0 font-['Liberation_Sans',Arial,sans-serif]">
          <thead>
            <tr className="h-[19px] bg-[#f0f0f0] text-black">
              <th className="w-[66px] p-0 pl-1.5 pt-0.5 text-left font-normal border-r border-[#a0a0a0]">Código</th>
              <th className="p-0 pl-1.5 pt-0.5 text-left font-normal">Descrição</th>
            </tr>
          </thead>
          <tbody>
            {institutions.map(i => (
              <tr key={i.code} className={`h-5 ${i.row}`}>
                <td className="p-0 pl-1 border-r border-b border-[#a0a0a0]">{i.code}</td>
                <td className="p-0 pl-[3px] border-r border-b border-[#a0a0a0] whitespace-nowrap">{i.name}</td>
              </tr>
            ))}
          </tbody>
        </table>
      </div>
      <div className="flex justify-end gap-2 pt-1.5 pb-[5px] pr-1.5">
        <PushButton label="Limpar" />
        <PushButton label="OK" kind="primary" />
        <PushButton label="Cancelar" kind="gray" />
      </div>
    </div>
  </section>
);

/* ---------- Cursos / Habilitações window ---------- */

const cursoTabs: PageTab[] = [
  { label: 'Identificação', width: 'w-[95px]' },
  { label: 'Ingresso', width: 'w-[70px]' },
  { label: 'Diploma', width: 'w-[67px]' },
  { label: 'Transferência', width: 'w-[102px]' },
  { label: 'Observações', width: 'w-[99px]' },
  { label: 'Histórico', width: 'w-[71px]' },
  { label: 'Campos complementares', width: 'w-[180px]', active: true, marked: true },
];

const CourseWindow = () => (
  <ChildWindow title="Cursos / Habilitações: 00002 - Direito" className="absolute z-10 left-[17px] right-[13px] top-[225px] bottom-[39px]">
    <div className="border-b border-[#a0a0a0]"><RecordToolbar counter="1/2" /></div>
    <div className="h-[31px] pt-1 pl-[3px]">
      <button className={`flex items-center gap-1 leading-4 ${toolbarText}`}><AnalysisIcon />Análise curricular</button>
    </div>
    <div className="flex flex-col flex-1 mx-[5px] bg-white pt-0.5 pl-0.5 pr-px pb-px">
      <TabStrip tabs={cursoTabs} />
      <div className="flex-1 border border-[#9d9d9d]">
        <div className="flex items-start pl-[7px] pr-1.5 font-['Liberation_Sans',Arial,sans-serif] text-black">
          <label htmlFor="originCode" className="w-[145px] shrink-0 leading-4">INSTITUIÇÃO DE ORIGEM:</label>
          <input id="originCode" className="mt-1 w-[70px] h-5 border border-[#dfe1e6] border-t-[#c2c5cb]" />
          <input aria-label="Descrição da instituição de origem" className="flex-1 mt-1 ml-1 h-5 border border-[#dfe1e6] border-t-[#a4a7ad]" />
          <button aria-label="Selecionar instituição" className="relative ml-[3px] mt-[5px] w-[19px] h-[19px] rounded-[3px] border border-[#2f86b8] bg-linear-to-b from-[#eef9ff] to-[#b8e2f6] shadow-[inset_0_0_0_1px_#48c8f0] leading-[17px]">
            ...
            <Highlight className="-left-[7px] -right-[7px] -top-2 -bottom-2" />
          </button>
        </div>
      </div>
    </div>
    <WindowFooter />
    <ConsistencyDialog />
  </ChildWindow>
);

const StudentWindow = () => (
  <ChildWindow title="Aluno: EP-0663 - T - Maria A Teste Usuário 5 - 03.9.0519" className="relative flex-1 ml-px">
    <RecordToolbar counter="1/1" off />
    <div className="flex flex-col flex-1 mt-1 mx-[5px] bg-white pt-0.5 pl-0.5 pr-px pb-px">
      <TabStrip tabs={alunoTabs} />
      <div className="flex flex-col flex-1 border border-[#9d9d9d] p-px">
        <div className="flex-1 border border-[#b4b4b4]">
          <div className="bg-[#e1edff]">
            <GridToolbar />
            <LayoutToolbar />
          </div>
          <div className="flex items-center h-[35px] pt-0.5 pl-[5px] border-t border-[#cfcfcf] bg-[#f5f5f7] text-[#7d7d7d]">
            Arraste aqui o cabeçalho de uma coluna para agrupar
          </div>
          <StudentGrid />
        </div>
      </div>
    </div>
    <WindowFooter />
    <CourseWindow />
  </ChildWindow>
);

const StatusItem = ({ icon, label, width }: { icon: React.ReactNode; label: string; width: string }) => (
  <button className={`flex items-center h-4 gap-px pl-2 border-l border-[#c3cfdf] ${width}`}>
    {icon}
    <span className="leading-[14px]">{label}</span>
  </button>
);

export default function App() {
  return (
    <div className="flex flex-col min-h-screen overflow-hidden bg-[#e1edff] font-[Roboto,'DejaVu_Sans_Condensed',sans-serif] text-[11px] leading-[14px]">
      <Gradients />
      <TitleBar />
      <MenuTabs />
      <Ribbon />
      <main className="flex flex-1">
        <StudentWindow />
        <aside className="w-[27px] shrink-0 pt-2">
          <button className="flex flex-col items-center ml-2 w-5 pt-2 border-t border-[#c3cfdf] text-[#2a3340]">
            <RunIcon />
            <span className="mt-0.5 [writing-mode:vertical-rl]">Executar</span>
          </button>
        </aside>
      </main>
      <footer className="flex items-end h-[23px] shrink-0 pl-1 text-[#1e2f48]">
        <StatusItem icon={<MonitorIcon />} label="Sistema" width="w-[75px]" />
        <StatusItem icon={<MonitorIcon />} label="Aplicação" width="w-[83px]" />
        <StatusItem icon={<MessagesIcon />} label="Mensagens" width="w-[90px]" />
      </footer>
    </div>
  );
}
